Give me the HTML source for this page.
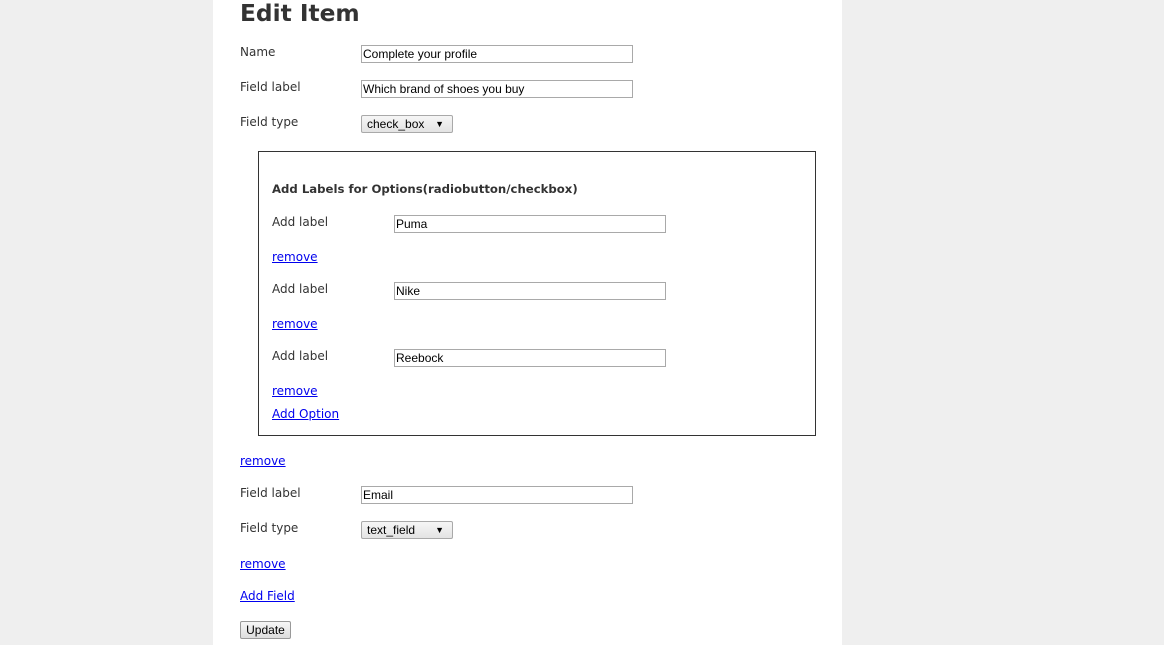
<!DOCTYPE html><html><head><style>
body{margin:0;background:#efefef;width:1164px;height:645px;overflow:hidden;position:relative;font-family:"DejaVu Sans",sans-serif;font-size:12px;color:#333}
.col{position:absolute;left:213px;top:0;width:629px;height:645px;background:#fff}
.a{position:absolute;white-space:nowrap;line-height:14px}
h1{position:absolute;left:240px;top:-1px;margin:0;font-size:23.3px;font-weight:bold;color:#333;line-height:30px}
.in{position:absolute;width:269px;height:16px;border:1px solid #a9a9a9;font-family:"Liberation Sans",sans-serif;font-size:12px;color:#000;line-height:17px;padding-left:1px;box-sizing:content-box}
.sel{position:absolute;width:90px;height:16px;border:1px solid #a9a9a9;background:linear-gradient(#f6f6f6,#e3e3e3);font-family:"Liberation Sans",sans-serif;font-size:12px;color:#000;line-height:17px;border-radius:2px}
.sel span{position:absolute;left:5px}.sel b{position:absolute;right:8px;font-size:9px;font-weight:normal}
a{color:#00e;text-decoration:underline}
.box{position:absolute;left:258px;top:151px;width:556px;height:283px;border:1px solid #333}
button{position:absolute;left:240px;top:621px;width:51px;height:18px;font-family:"Liberation Sans",sans-serif;font-size:12px;border:1px solid #999;background:linear-gradient(#f6f6f6,#ddd);padding:0;border-radius:2px;color:#000}
</style></head><body>
<div class="col"></div>
<h1>Edit Item</h1>
<div class="a" style="left:240px;top:45px">Name</div><div class="in" style="left:361px;top:45px">Complete your profile</div>
<div class="a" style="left:240px;top:80px">Field label</div><div class="in" style="left:361px;top:80px">Which brand of shoes you buy</div>
<div class="a" style="left:240px;top:115px">Field type</div><div class="sel" style="left:361px;top:115px"><span>check_box</span><b>▼</b></div>
<div class="box"></div>
<div class="a" style="left:272px;top:182px;font-weight:bold;font-size:11.7px">Add Labels for Options(radiobutton/checkbox)</div>
<div class="a" style="left:272px;top:215px">Add label</div><div class="in" style="left:394px;top:215px">Puma</div>
<a class="a" style="left:272px;top:250px">remove</a>
<div class="a" style="left:272px;top:282px">Add label</div><div class="in" style="left:394px;top:282px">Nike</div>
<a class="a" style="left:272px;top:317px">remove</a>
<div class="a" style="left:272px;top:349px">Add label</div><div class="in" style="left:394px;top:349px">Reebock</div>
<a class="a" style="left:272px;top:384px">remove</a>
<a class="a" style="left:272px;top:407px">Add Option</a>
<a class="a" style="left:240px;top:454px">remove</a>
<div class="a" style="left:240px;top:486px">Field label</div><div class="in" style="left:361px;top:486px">Email</div>
<div class="a" style="left:240px;top:521px">Field type</div><div class="sel" style="left:361px;top:521px"><span>text_field</span><b>▼</b></div>
<a class="a" style="left:240px;top:557px">remove</a>
<a class="a" style="left:240px;top:589px">Add Field</a>
<button>Update</button>
</body></html>
